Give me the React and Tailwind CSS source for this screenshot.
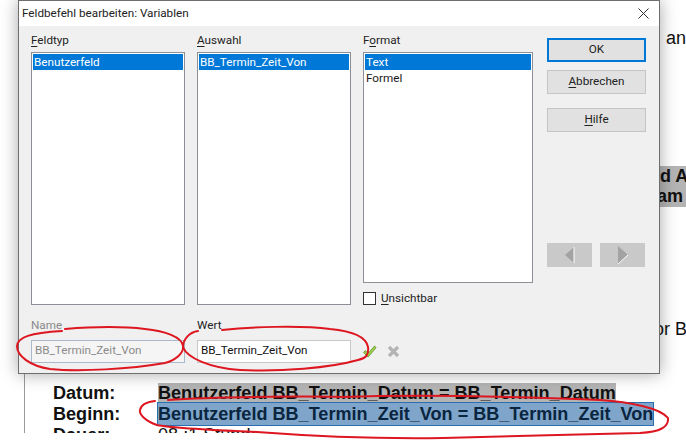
const UI_FONT = 'font-["Roboto","Open_Sans",sans-serif]'
const DOC_FONT = 'font-["Liberation_Sans",Arial,sans-serif]'

function Mnemonic({ before = '', letter, after = '' }) {
  return <>{before}<span className="underline underline-offset-2">{letter}</span>{after}</>
}

function ListBox({ width, height = 253, items }) {
  return (
    <div className="border border-[#8c9096] bg-white p-px" style={{ width, height }}>
      {items.map((item, i) => (
        <div key={item} className={"h-4 px-px text-[11.7px] leading-4 " + (i === 0 ? 'bg-[#0078d7] text-white' : 'text-[#1a1a1a]')}>
          {item}
        </div>
      ))}
    </div>
  )
}

function Column({ label, width, items }) {
  return (
    <div className="flex flex-col" style={{ width }}>
      <div className="mb-[3px] mt-px h-[17px] text-[11.7px] leading-[17px] text-[#222]">{label}</div>
      <ListBox width={width} items={items} />
    </div>
  )
}

function DialogButton({ children, primary }) {
  return (
    <div className={"flex h-6 w-[99px] items-center justify-center bg-[#e1e1e1] text-[11.7px] text-[#222] " +
      (primary ? 'border-2 border-[#0078d7]' : 'border border-[#c4c4c4]')}>
      {children}
    </div>
  )
}

function NavButton({ children }) {
  return <div className="h-6 w-[45px] bg-[#c9c9c9]">{children}</div>
}

function Dialog() {
  return (
    <div className={"absolute left-[18px] top-0 flex h-[374px] w-[642px] flex-col border border-[#6e6e6e] bg-[#f0f0f0] shadow-[0_0_16px_rgba(0,0,0,0.35)] " + UI_FONT}>
      <div className="flex h-[25px] shrink-0 items-center justify-between bg-white pl-[3px] pr-[9px] text-[11.7px] text-[#222]">
        <span>Feldbefehl bearbeiten: Variablen</span>
        <svg width="11" height="11" viewBox="0 0 11 11" className="mr-px"><path d="M0.5 0.5 10.5 10.5M10.5 0.5 0.5 10.5" stroke="#333" strokeWidth="1" fill="none" /></svg>
      </div>
      <div className="flex flex-1 pl-3 pt-[5px]">
        <div className="flex w-[501px] flex-col">
          <div className="flex gap-3">
            <Column label={<Mnemonic letter="F" after="eldtyp" />} width={154} items={['Benutzerfeld']} />
            <Column label={<Mnemonic letter="A" after="uswahl" />} width={154} items={['BB_Termin_Zeit_Von']} />
            <div className="flex w-[170px] flex-col">
              <div className="mb-[3px] mt-px h-[17px] text-[11.7px] leading-[17px] text-[#222]"><Mnemonic before="F" letter="o" after="rmat" /></div>
              <ListBox width={170} height={231} items={['Text', 'Formel']} />
              <div className="mt-[7px] flex items-center gap-[5px] text-[11.7px] text-[#222]">
                <div className="h-[13px] w-[13px] border border-[#333] bg-white" />
                <span><Mnemonic letter="U" after="nsichtbar" /></span>
              </div>
            </div>
          </div>
          <div className="mt-[9px] flex gap-3">
            <div className="flex w-[154px] flex-col">
              <div className="mb-[6px] h-[17px] text-[11.7px] leading-[17px] text-[#8a8a8a]">Name</div>
              <div className="flex h-[23px] items-center border border-[#a9bacd] bg-[#f5f5f5] pl-[3px] text-[11.7px] text-[#8a8a8a]">BB_Termin_Zeit_Von</div>
            </div>
            <div className="flex w-[154px] flex-col">
              <div className="mb-[6px] h-[17px] text-[11.7px] leading-[17px] text-[#222]">Wert</div>
              <div className="flex h-[23px] items-center border border-[#c8c8c8] bg-white pl-[3px] text-[11.7px] text-[#111]">BB_Termin_Zeit_Von</div>
            </div>
            <div className="-ml-px flex items-end gap-[10px] pb-[5px]">
              <svg width="15" height="13" viewBox="0 0 15 14"><path d="M1 8 3 6 6 9 13 1 14.500 3 6 13Z" fill="#9ed04a" stroke="#5c8a22" strokeWidth="0.8" /></svg>
              <svg width="13" height="13" viewBox="0 0 13 13"><path d="M2 2 11 11M11 2 2 11" stroke="#b4b4b4" strokeWidth="3.2" fill="none" /></svg>
            </div>
          </div>
        </div>
        <div className="ml-[15px] flex flex-col pt-[7px]">
          <DialogButton primary>OK</DialogButton>
          <div className="mt-2"><DialogButton><Mnemonic letter="A" after="bbrechen" /></DialogButton></div>
          <div className="mt-[14px]"><DialogButton><Mnemonic letter="H" after="ilfe" /></DialogButton></div>
          <div className="mt-[111px] flex gap-2">
            <NavButton>
              <svg width="45" height="24" viewBox="0 0 45 24"><path d="M18 12 27 4V20Z" fill="#a3a3a3" /><path d="M27 4V20" stroke="#fff" /></svg>
            </NavButton>
            <NavButton>
              <svg width="45" height="24" viewBox="0 0 45 24"><path d="M28 12 18 3V21Z" fill="#a3a3a3" /><path d="M28 12 18 21" stroke="#fff" /></svg>
            </NavButton>
          </div>
        </div>
      </div>
    </div>
  )
}

function Annotations() {
  return (
    <svg width="686" height="440" viewBox="0 0 686 440" className="pointer-events-none absolute left-0 top-0" fill="none" stroke="#dd1620" strokeWidth="2" strokeLinecap="round">
      <path d="M65 329C90 327 120 326 145 329 165 331 182 337 183 346 184 353 176 360 165 363 130 369 80 372 50 369 30 366 17 356 17 346 18 337 30 333 62 331" />
      <path d="M222 330C250 327 300 325 330 329 352 331 366 336 368 347 369 355 366 358 358 360 330 368 280 372 240 370 210 368 187 358 183 347 183 339 190 332 198 331" />
      <path d="M168 400C210 397 300 396 343 397 400 395 500 396 600 400 630 402 660 408 668 418 669 427 660 432 640 433 580 434 500 437 443 438 380 439 310 436 257 432 210 430 170 428 157 425 145 421 139 414 140 410 141 404 147 402 155 401" />
    </svg>
  )
}

function DocRow({ label, children, className, height }) {
  return (
    <div className="flex items-center pl-[52px]" style={{ height }}>
      <span className="w-[105px] shrink-0 font-bold text-[#111]">{label}</span>
      <span className={className}>{children}</span>
    </div>
  )
}

function Background() {
  return (
    <div className={"ml-6 flex h-[433px] flex-col overflow-hidden border-l border-[#9a9a9a] " + DOC_FONT}>
      <div className="-ml-6 flex h-[383px] shrink-0 justify-end">
        <div className="flex w-[40px] shrink-0 flex-col overflow-hidden text-lg text-[#111]">
          <div className="mt-[28px] h-5 whitespace-nowrap pl-[10px] leading-5">, an</div>
          <div className="mt-[118px] h-[41px] whitespace-nowrap bg-[#b4b4b4] pl-[9px] font-bold leading-5">
            <div>ld A</div>
            <div className="-ml-[11px]">Nam</div>
          </div>
          <div className="mt-[112px] h-5 whitespace-nowrap pl-[8px] leading-5">or Be</div>
        </div>
      </div>
      <div className="-ml-6 text-[18.08px] leading-5">
        <DocRow height={20} label="Datum:" className="bg-[#b4b4b4] font-bold text-[#111] whitespace-nowrap">Benutzerfeld BB_Termin_Datum = BB_Termin_Datum</DocRow>
        <DocRow height={22} label="Beginn:" className="-ml-px border border-[#2a6fb0] bg-[#7fa6ca] py-px font-bold text-[#0a2540] whitespace-nowrap">Benutzerfeld BB_Termin_Zeit_Von = BB_Termin_Zeit_Von</DocRow>
        <DocRow height={20} label="Dauer:" className="font-normal text-[#111]">08 :1 Stunde</DocRow>
      </div>
    </div>
  )
}

export default function App() {
  return (
    <div className="relative h-[440px] w-[686px] overflow-hidden bg-white">
      <Background />
      <Dialog />
      <Annotations />
    </div>
  )
}
